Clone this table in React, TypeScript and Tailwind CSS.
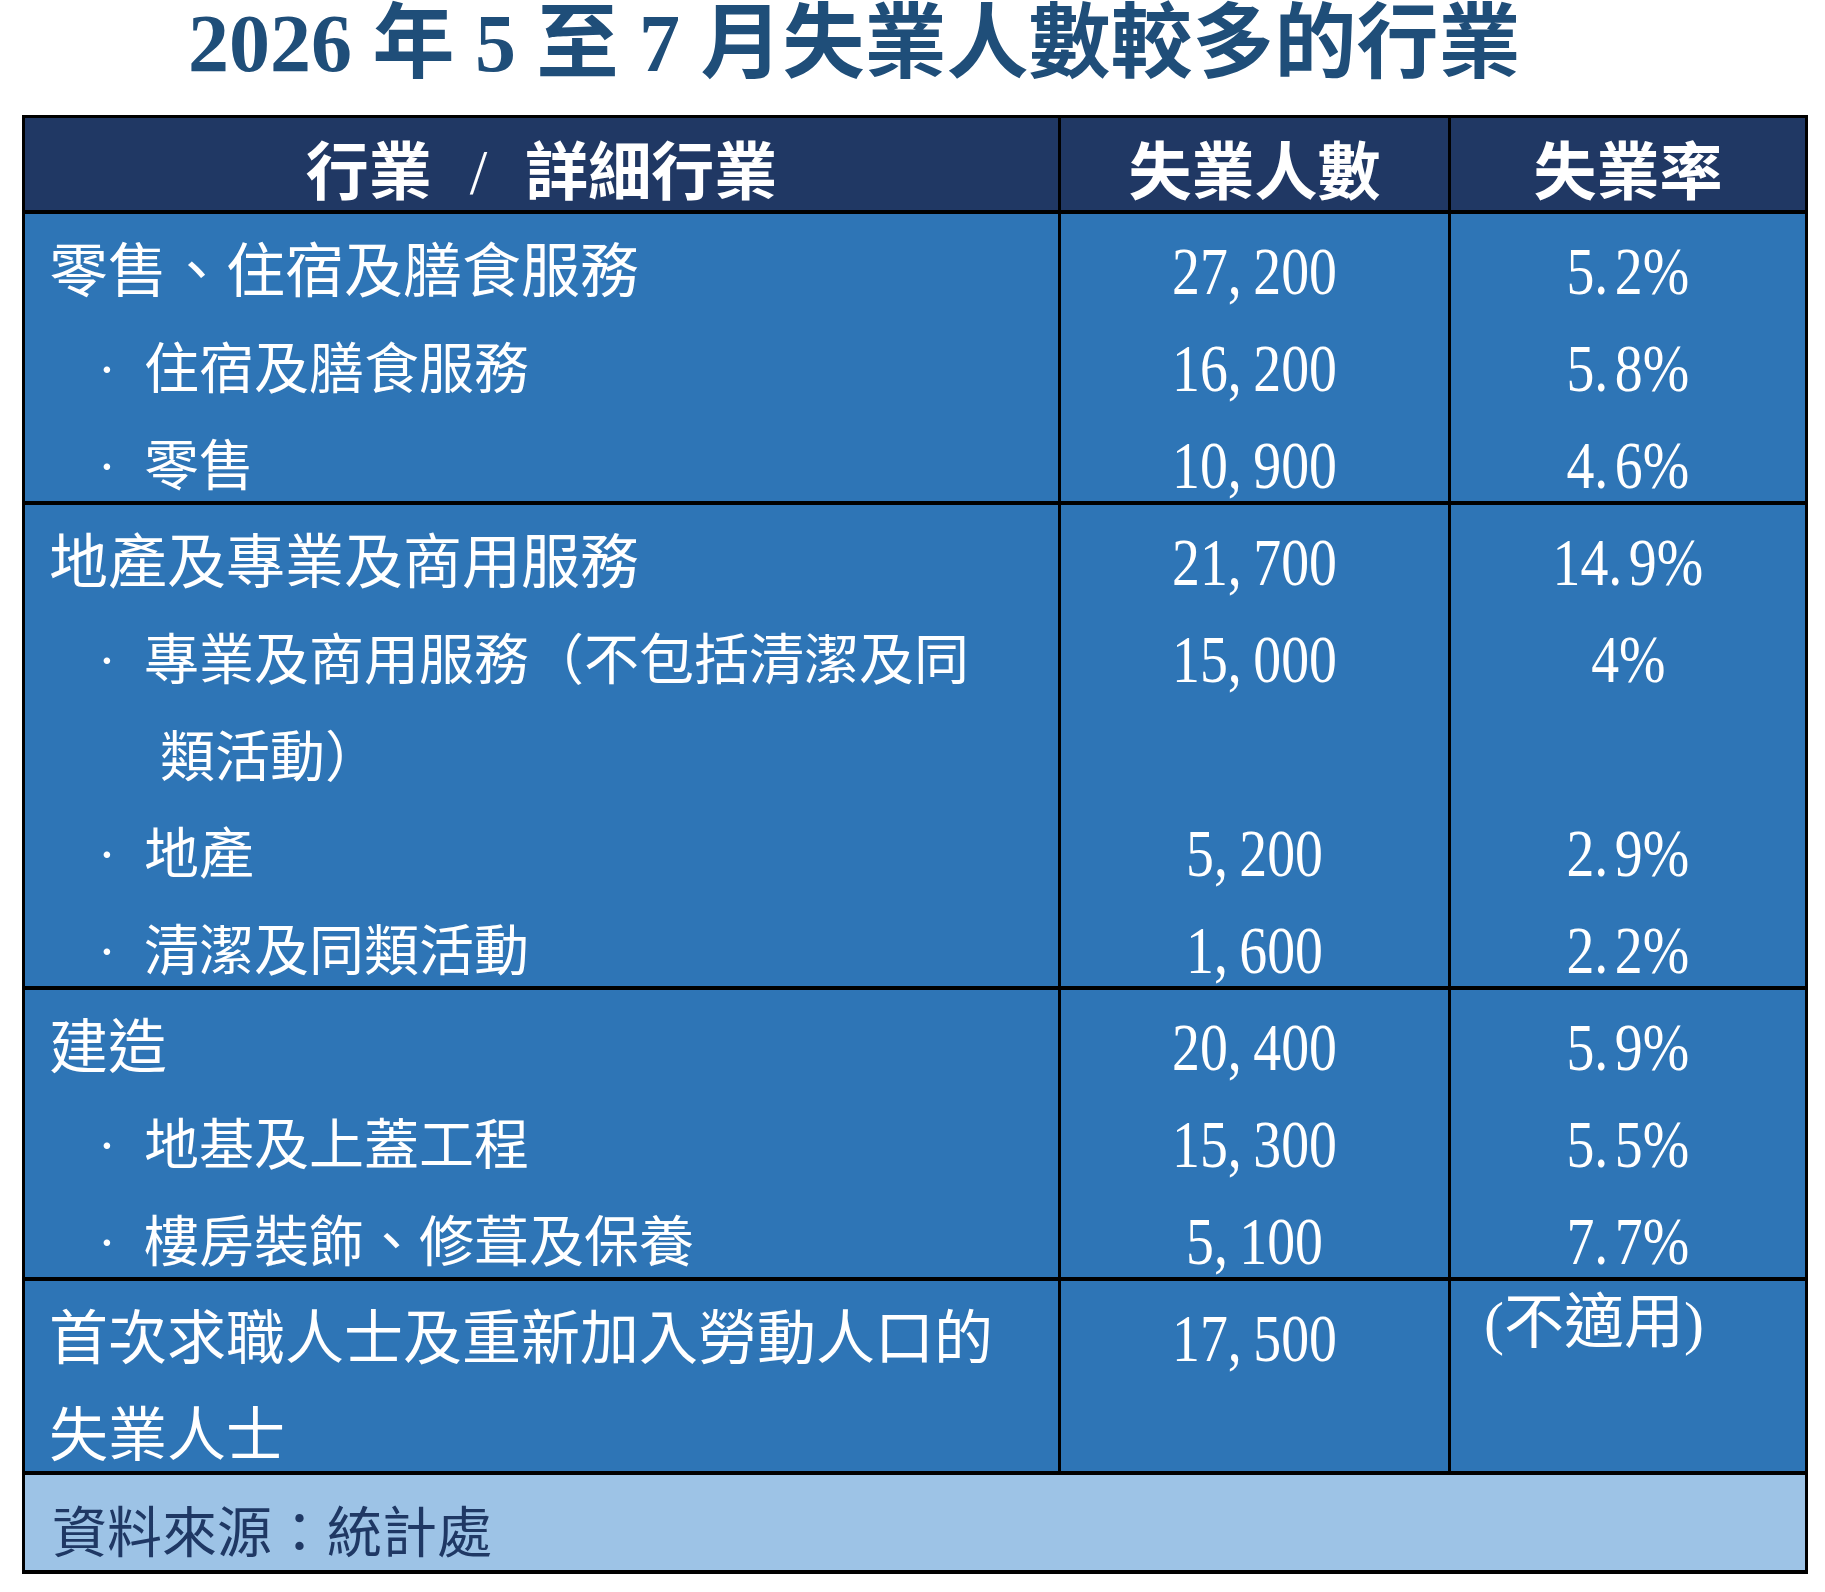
type Row = {
  lines: string[];
  sub?: boolean;
  count: string;
  rate: string;
};

type Group = Row[];

const groups: Group[] = [
  [
    { lines: ["零售、住宿及膳食服務"], count: "27,200", rate: "5.2%" },
    { lines: ["住宿及膳食服務"], sub: true, count: "16,200", rate: "5.8%" },
    { lines: ["零售"], sub: true, count: "10,900", rate: "4.6%" },
  ],
  [
    { lines: ["地產及專業及商用服務"], count: "21,700", rate: "14.9%" },
    {
      lines: ["專業及商用服務（不包括清潔及同", "類活動）"],
      sub: true,
      count: "15,000",
      rate: "4%",
    },
    { lines: ["地產"], sub: true, count: "5,200", rate: "2.9%" },
    { lines: ["清潔及同類活動"], sub: true, count: "1,600", rate: "2.2%" },
  ],
  [
    { lines: ["建造"], count: "20,400", rate: "5.9%" },
    { lines: ["地基及上蓋工程"], sub: true, count: "15,300", rate: "5.5%" },
    { lines: ["樓房裝飾、修葺及保養"], sub: true, count: "5,100", rate: "7.7%" },
  ],
];

// narrow, tall digits with a little air after the separators
function Num({ value }: { value: string }) {
  const parts = value.split(/([,.])/);
  return (
    <span className="inline-block origin-center scale-x-[0.82]">
      {parts.map((p, i) =>
        p === "," || p === "." ? (
          <span key={i} className={p === "," ? "mr-[14px]" : "mr-[8px]"}>
            {p}
          </span>
        ) : (
          <span key={i}>{p}</span>
        )
      )}
    </span>
  );
}

function Label({ row }: { row: Row }) {
  return (
    <>
      {row.lines.map((line, i) => {
        if (!row.sub) {
          return (
            <div key={i} className="pl-[24px] text-[59px] whitespace-nowrap">
              {line}
            </div>
          );
        }
        if (i > 0) {
          return (
            <div key={i} className="pl-[135px] text-[55px] whitespace-nowrap">
              {line}
            </div>
          );
        }
        return (
          <div key={i} className="flex pl-[45px] text-[55px] whitespace-nowrap">
            <span className="w-[74px] text-center">·</span>
            <span>{line}</span>
          </div>
        );
      })}
    </>
  );
}

function Values({ row, field }: { row: Row; field: "count" | "rate" }) {
  return (
    <>
      <div className="text-center">
        <Num value={row[field]} />
      </div>
      {row.lines.slice(1).map((_, i) => (
        <div key={i} className="h-[97px]" />
      ))}
    </>
  );
}

export default function App() {
  return (
    <div className="min-h-[1592px] w-[1825px] bg-white font-['Liberation_Serif','Noto_Sans_CJK_TC',serif]">
      {/* Title */}
      <h1 className="pl-[188px] text-[82px] font-bold leading-[88px] text-[#1f4e79] whitespace-nowrap">
        2026 年 5 至 7 月失業人數較多的行業
      </h1>

      <div className="ml-[22px] mt-[27px] w-[1786px] border-x-[3px] border-t-[3px] border-b-[4px] border-black">
        {/* Header */}
        <div className="grid h-[96px] grid-cols-[1036px_390px_1fr] border-b-[4px] border-black bg-[#203864] text-[63px] font-bold text-white">
          <div className="flex items-center justify-center border-r-[3px] border-black pt-[8px]">
            <span>行業</span>
            <span className="mx-[38px] font-normal">/</span>
            <span>詳細行業</span>
          </div>
          <div className="flex items-center justify-center border-r-[3px] border-black pt-[8px]">
            失業人數
          </div>
          <div className="flex items-center justify-center pt-[8px]">失業率</div>
        </div>

        {/* Groups */}
        {groups.map((group, gi) => (
          <div
            key={gi}
            className="grid grid-cols-[1036px_390px_1fr] border-b-[4px] border-black bg-[#2e75b6] leading-[97px] text-white"
          >
            <div className="border-r-[3px] border-black">
              <div className="-mb-[14px] pt-[10px]">
                {group.map((row, ri) => (
                  <Label key={ri} row={row} />
                ))}
              </div>
            </div>
            <div className="border-r-[3px] border-black text-[68px]">
              <div className="-mb-[14px] pt-[9px]">
                {group.map((row, ri) => (
                  <Values key={ri} row={row} field="count" />
                ))}
              </div>
            </div>
            <div className="text-[68px]">
              <div className="-mb-[14px] pt-[9px]">
                {group.map((row, ri) => (
                  <Values key={ri} row={row} field="rate" />
                ))}
              </div>
            </div>
          </div>
        ))}

        {/* First-time job seekers */}
        <div className="grid grid-cols-[1036px_390px_1fr] border-b-[4px] border-black bg-[#2e75b6] leading-[97px] text-white">
          <div className="border-r-[3px] border-black text-[59px]">
            <div className="-mb-[14px] pt-[10px]">
              <div className="pl-[24px] whitespace-nowrap">首次求職人士及重新加入勞動人口的</div>
              <div className="pl-[24px] whitespace-nowrap">失業人士</div>
            </div>
          </div>
          <div className="border-r-[3px] border-black pt-[9px] text-center text-[68px]">
            <Num value="17,500" />
          </div>
          <div className="pr-[68px] text-center text-[60px] leading-[84px]">(不適用)</div>
        </div>

        {/* Source */}
        <div className="bg-[#9dc3e6] pl-[27px] pt-[23px] text-[55px] leading-[72px] text-[#1f3864]">
          資料來源：統計處
        </div>
      </div>
    </div>
  );
}
